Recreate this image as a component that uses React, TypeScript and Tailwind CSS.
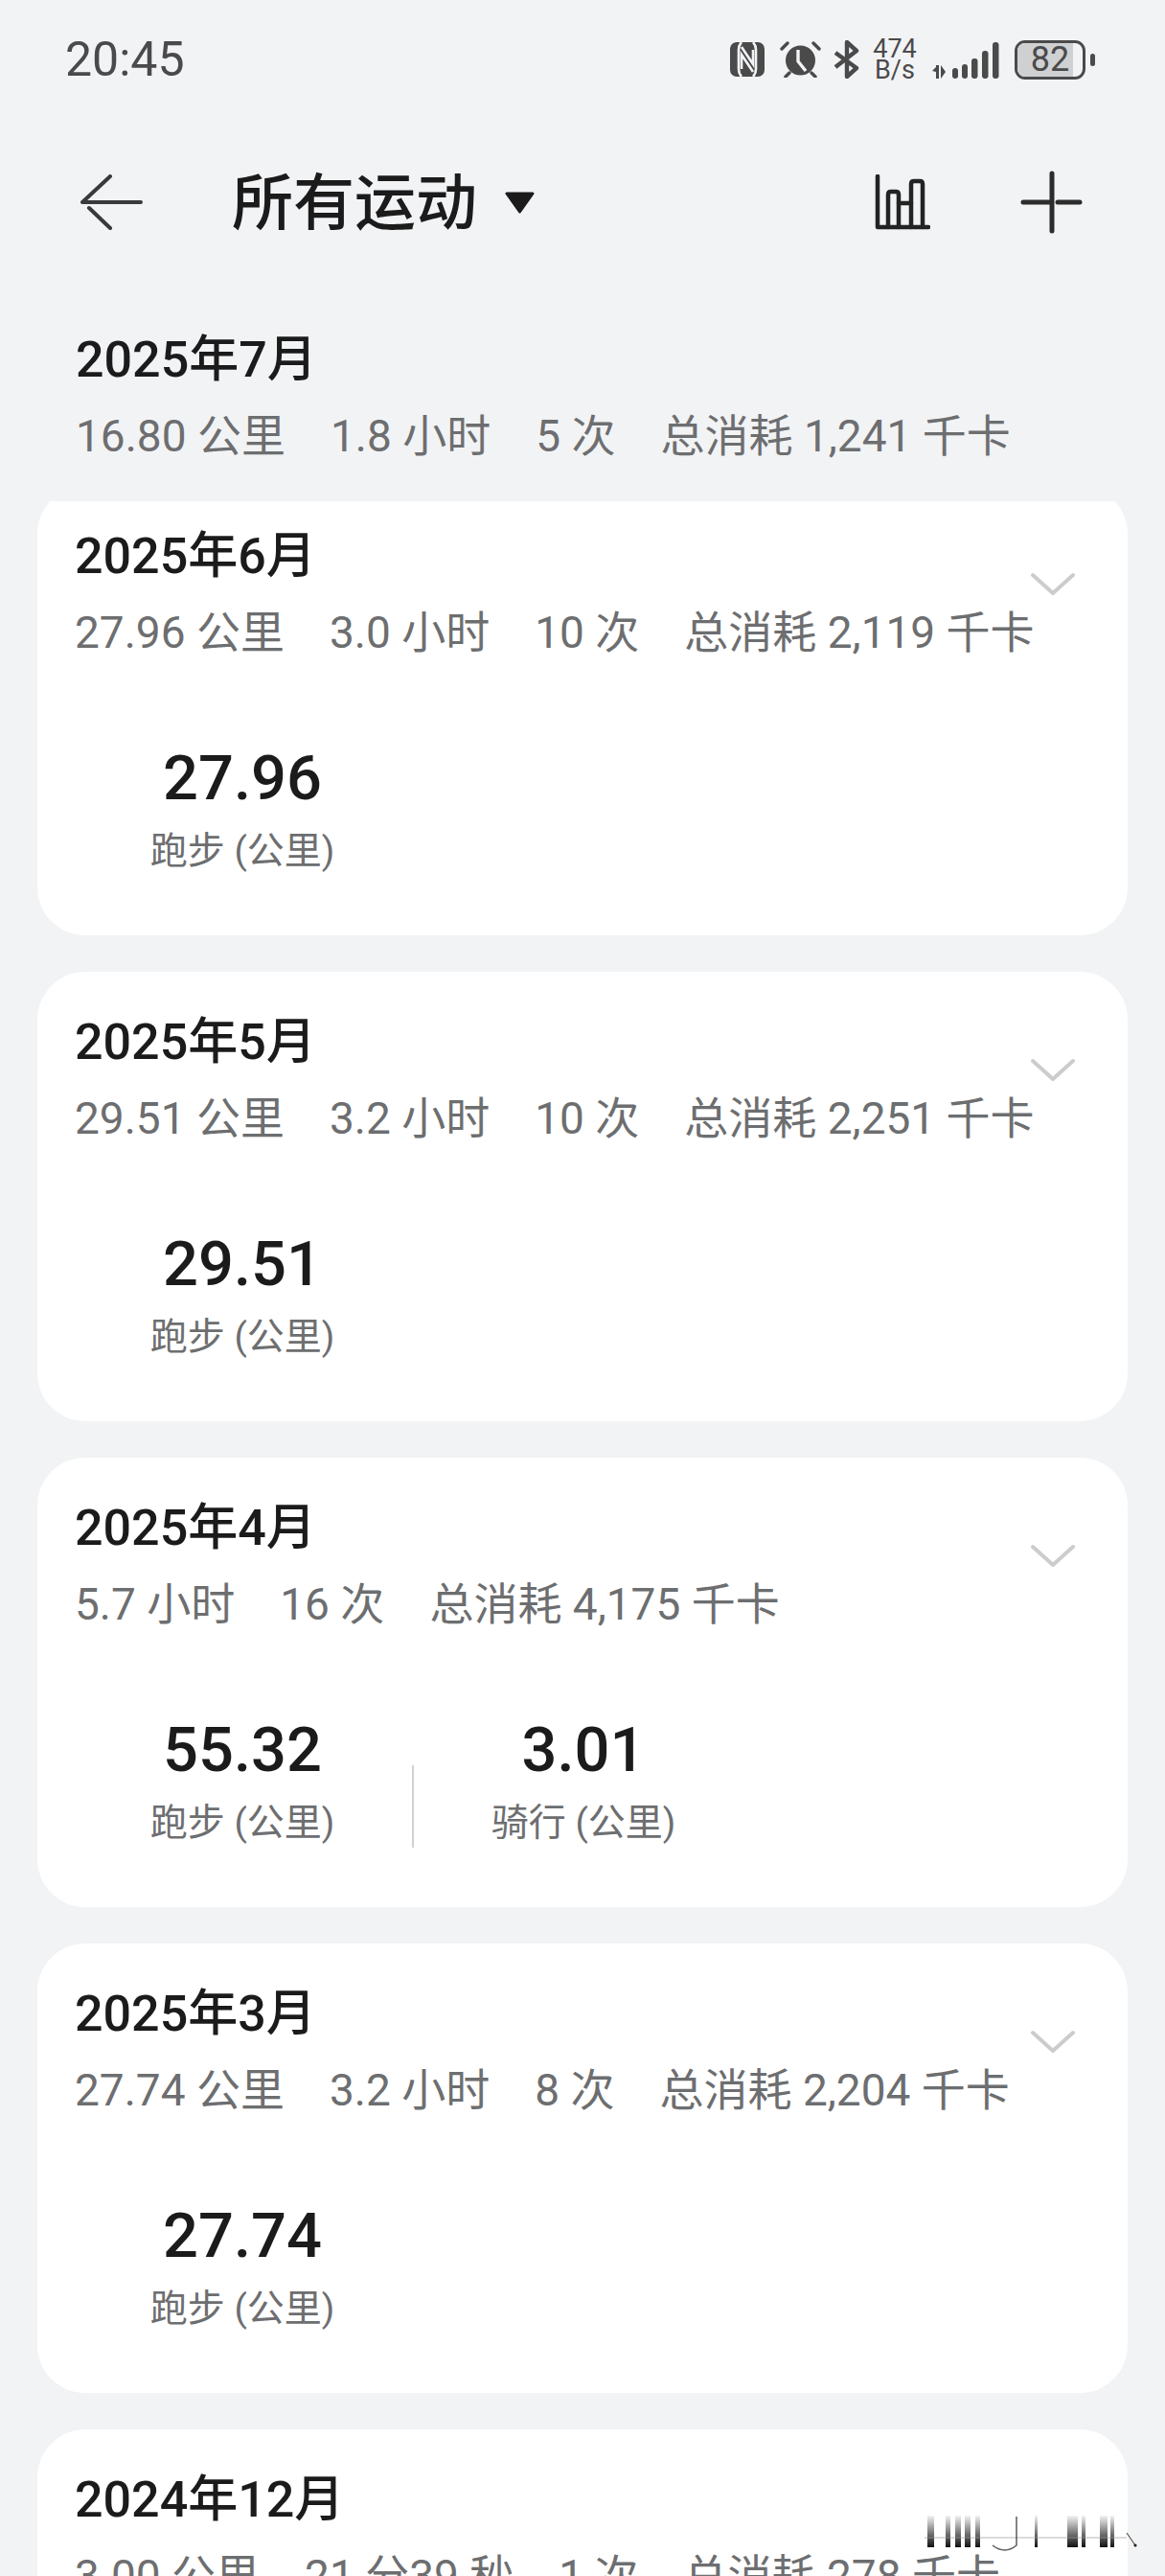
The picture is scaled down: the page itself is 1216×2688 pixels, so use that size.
import React from "react";

const sans = "font-['Roboto','Noto_Sans_CJK_SC',sans-serif]";

const months = [
  { title: "2025年6月", stats: ["27.96 公里", "3.0 小时", "10 次", "总消耗 2,119 千卡"], values: [{ value: "27.96", label: "跑步 (公里)" }] },
  { title: "2025年5月", stats: ["29.51 公里", "3.2 小时", "10 次", "总消耗 2,251 千卡"], values: [{ value: "29.51", label: "跑步 (公里)" }] },
  {
    title: "2025年4月",
    stats: ["5.7 小时", "16 次", "总消耗 4,175 千卡"],
    values: [
      { value: "55.32", label: "跑步 (公里)" },
      { value: "3.01", label: "骑行 (公里)" },
    ],
  },
  { title: "2025年3月", stats: ["27.74 公里", "3.2 小时", "8 次", "总消耗 2,204 千卡"], values: [{ value: "27.74", label: "跑步 (公里)" }] },
  { title: "2024年12月", stats: ["3.00 公里", "21 分39 秒", "1 次", "总消耗 278 千卡"], values: [] },
];

function Stats({ items }: { items: string[] }) {
  return (
    <div className="mt-[23px] flex gap-[47px] text-[46px] leading-[50px] whitespace-nowrap text-[#6d6e70]">
      {items.map((s) => (
        <span key={s}>{s}</span>
      ))}
    </div>
  );
}

function Chevron() {
  return (
    <svg width="46" height="26" viewBox="0 0 46 26" fill="none" stroke="#cbcccd" strokeWidth="4" strokeLinecap="round" strokeLinejoin="round">
      <path d="M2 3 L23 22 L44 3" />
    </svg>
  );
}

function Metric({ value, label }: { value: string; label: string }) {
  return (
    <div className="flex w-[192px] flex-col items-center whitespace-nowrap">
      <div className="text-[65px] leading-[76px] font-medium text-[#1b1b1c]">{value}</div>
      <div className="mt-[15px] text-[39px] leading-[46px] text-[#6d6e70]">{label}</div>
    </div>
  );
}

function MonthCard({ month, first }: { month: (typeof months)[number]; first?: boolean }) {
  return (
    <section className={`relative h-[469px] shrink-0 rounded-[50px] bg-white pt-[43px] pl-[39px] ${first ? "mt-[-16.5px]" : ""}`}>
      <h2 className="text-[52px] leading-[62px] font-medium text-[#1b1b1c]">{month.title}</h2>
      <Stats items={month.stats} />
      <div className="absolute top-[90px] right-[55px]">
        <Chevron />
      </div>
      <div className="mt-[89px] ml-[79px] flex items-end">
        {month.values.map((v, i) => (
          <React.Fragment key={v.label}>
            {i > 0 && <div className="mx-[81px] mb-[-3px] h-[86px] w-[2px] bg-[#d0d1d3]" />}
            <Metric value={v.value} label={v.label} />
          </React.Fragment>
        ))}
      </div>
    </section>
  );
}

function StatusBar() {
  return (
    <div className="flex h-[62px] items-center justify-between pr-[73px] pl-[68px] text-[#4a4a4b]">
      <span className="text-[50px] leading-[62px]">20:45</span>
      <div className="flex items-center">
        {/* nfc */}
        <svg width="36" height="36" viewBox="0 0 36 36">
          <rect width="36" height="36" rx="7" fill="#4a4a4b" />
          <g fill="none" stroke="#f2f3f5" strokeWidth="2.6">
            <path d="M12 0 Q9 3 9 8 V28 Q9 33 12 36" />
            <path d="M24 0 Q27 3 27 8 V28 Q27 33 24 36" />
            <path d="M12 5 L24 23 V8" />
            <path d="M12 28 V13 L24 31" />
          </g>
        </svg>
        {/* alarm */}
        <svg width="43" height="38" viewBox="0 0 43 38" className="ml-[16px]">
          <circle cx="21.5" cy="20" r="15.5" fill="#4a4a4b" />
          <path d="M19 9 V21 L27 31" fill="none" stroke="#f2f3f5" strokeWidth="3.4" />
          <path d="M2 8 L8 2 M41 8 L35 2 M10 33 L6 37 M33 33 L37 37" stroke="#4a4a4b" strokeWidth="3.4" strokeLinecap="round" />
        </svg>
        {/* bluetooth */}
        <svg width="27" height="40" viewBox="0 0 27 40" className="ml-[13px]" fill="none" stroke="#4a4a4b" strokeWidth="4.4" strokeLinejoin="round">
          <path d="M2 13 L24 29 L14 38 V2 L24 11 L2 28" />
        </svg>
        <div className="ml-[14px] flex w-[46px] flex-col items-center text-[27px] leading-[22px]">
          <span>474</span>
          <span>B/s</span>
        </div>
        {/* signal */}
        <svg width="70" height="40" viewBox="0 0 70 40" className="mt-[2px] ml-[16px]" fill="#4a4a4b">
          <path d="M0 31 L4 27 V25 H7 V39 H4 V32 Z M9 25 L14 32 L9 39 Z" />
          <rect x="21" y="28" width="6" height="11" rx="3" />
          <rect x="31" y="24" width="6" height="15" rx="3" />
          <rect x="41" y="18" width="6.5" height="21" rx="3" />
          <rect x="52" y="10" width="6.5" height="29" rx="3" />
          <rect x="63" y="1" width="6.5" height="38" rx="3" />
        </svg>
        {/* battery */}
        <div className="ml-[16px] flex items-center">
          <div className="relative flex h-[41px] w-[74px] items-center justify-center overflow-hidden rounded-[11px] border-[3px] border-[#4a4a4b] text-[36px] leading-none">
            <div className="absolute inset-y-0 left-0 w-[86%] bg-[#cfd0d2]" />
            <span className="relative">82</span>
          </div>
          <div className="ml-[5px] h-[13px] w-[5px] rounded-full bg-[#4a4a4b]" />
        </div>
      </div>
    </div>
  );
}

function TitleBar() {
  return (
    <div className="mt-[73px] flex h-[90px] items-center pr-[86px] pl-[84px]">
      <svg width="65" height="58" viewBox="0 0 65 58" fill="none" stroke="#3a3a3b" strokeWidth="4" strokeLinecap="round" strokeLinejoin="round">
        <path d="M2 29 H63 M2 29 L31 2 M9 35 L31 56" />
      </svg>
      <h1 className="ml-[93px] pt-[3px] text-[64px] leading-[90px] font-medium text-[#1b1b1c]">所有运动</h1>
      <svg width="33" height="23" viewBox="0 0 33 23" className="ml-[28px]">
        <path d="M3 2 H30 L16.5 21 Z" fill="#1b1b1c" stroke="#1b1b1c" strokeWidth="3" strokeLinejoin="round" />
      </svg>
      <svg width="58" height="58" viewBox="0 0 58 58" className="ml-auto" fill="none" stroke="#232324" strokeWidth="4.5" strokeLinecap="round" strokeLinejoin="round">
        <path d="M3 2 V55 H56" />
        <path d="M14 55 V21 Q14 18 17 18 H22 Q25 18 25 21 V55" />
        <path d="M25 30 H38" />
        <path d="M38 55 V10 Q38 7 41 7 H47 Q50 7 50 10 V55" />
      </svg>
      <svg width="65" height="66" viewBox="0 0 65 66" className="ml-[94px]" fill="none" stroke="#2c2c2d" strokeWidth="5" strokeLinecap="round">
        <path d="M33 3 V63 M3 33 H31 M39 33 H62" />
      </svg>
    </div>
  );
}

function Watermark() {
  const bars = [
    [968, 7],
    [987, 5],
    [997, 6],
    [1007, 6],
    [1018, 5],
    [1080, 3],
    [1114, 11],
    [1129, 4],
    [1148, 8],
    [1159, 4],
  ];
  return (
    <svg width="240" height="44" viewBox="960 2620 240 44" className="absolute top-[2620px] left-[960px]">
      <defs>
        <linearGradient id="fade" x1="0" y1="0" x2="0" y2="1">
          <stop offset="0" stopColor="#111" stopOpacity="0.05" />
          <stop offset="1" stopColor="#111" stopOpacity="1" />
        </linearGradient>
      </defs>
      <rect x="960" y="2620" width="217" height="44" fill="#fff" />
      {bars.map(([x, w]) => (
        <rect key={x} x={x} y="2625" width={w} height="33" fill="url(#fade)" />
      ))}
      <path d="M965 2648 H1176" stroke="#999" strokeOpacity="0.35" strokeWidth="2" />
      <path d="M1036 2656 Q1049 2666 1061 2656 V2626" fill="none" stroke="#333" strokeWidth="1.5" strokeOpacity="0.8" />
      <path d="M1176 2643 L1185 2656" stroke="#555" strokeWidth="1.2" />
      <circle cx="1185" cy="2656" r="1.6" fill="#222" />
    </svg>
  );
}

export default function App() {
  return (
    <div className={`relative flex h-[2688px] w-[1216px] flex-col overflow-hidden bg-[#f2f3f5] ${sans}`}>
      <div className="pt-[31px]">
        <StatusBar />
      </div>
      <TitleBar />
      <div className="mt-[89px] pl-[79px]">
        <h2 className="text-[52px] leading-[62px] font-medium text-[#1b1b1c]">2025年7月</h2>
        <Stats items={["16.80 公里", "1.8 小时", "5 次", "总消耗 1,241 千卡"]} />
      </div>
      <div className="mt-[43px] flex flex-col gap-[38px] overflow-hidden px-[39px]">
        {months.map((m, i) => (
          <MonthCard key={m.title} month={m} first={i === 0} />
        ))}
      </div>
      <Watermark />
    </div>
  );
}
